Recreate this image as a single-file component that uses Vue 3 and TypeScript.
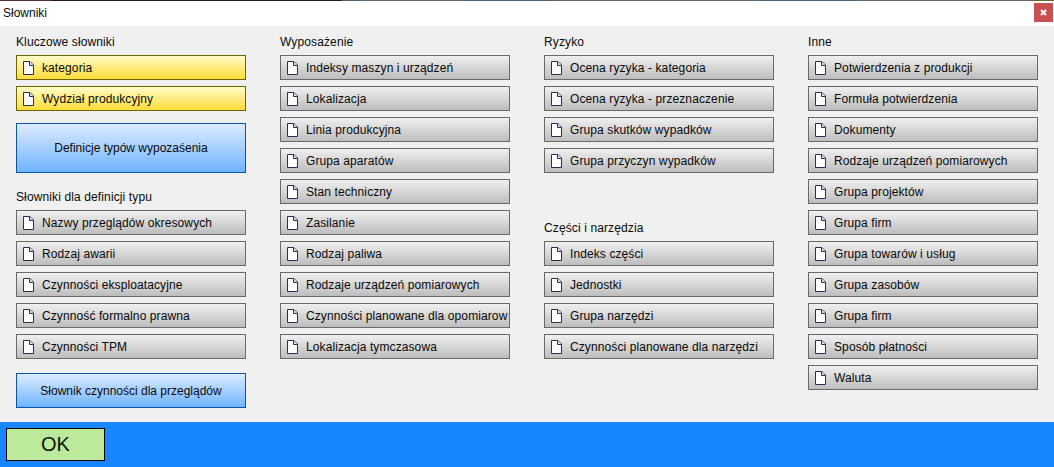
<script setup lang="ts">
type Item = { t: string; y?: boolean }
const col2: string[] = ['Indeksy maszyn i urządzeń','Lokalizacja','Linia produkcyjna','Grupa aparatów','Stan techniczny','Zasilanie','Rodzaj paliwa','Rodzaje urządzeń pomiarowych','Czynności planowane dla opomiarow','Lokalizacja tymczasowa']
const ryzyko: string[] = ['Ocena ryzyka - kategoria','Ocena ryzyka - przeznaczenie','Grupa skutków wypadków','Grupa przyczyn wypadków']
const czesci: string[] = ['Indeks części','Jednostki','Grupa narzędzi','Czynności planowane dla narzędzi']
const inne: string[] = ['Potwierdzenia z produkcji','Formuła potwierdzenia','Dokumenty','Rodzaje urządzeń pomiarowych','Grupa projektów','Grupa firm','Grupa towarów i usług','Grupa zasobów','Grupa firm','Sposób płatności','Waluta']
const key: Item[] = [{ t: 'kategoria', y: true }, { t: 'Wydział produkcyjny', y: true }]
const defs: string[] = ['Nazwy przeglądów okresowych','Rodzaj awarii','Czynności eksploatacyjne','Czynność formalno prawna','Czynności TPM']
const groups: { sections: { label: string; cls: string; items: Item[] }[] }[] = [
  { sections: [{ label: 'Wyposażenie', cls: '', items: col2.map(t => ({ t })) }] },
  { sections: [
    { label: 'Ryzyko', cls: '', items: ryzyko.map(t => ({ t })) },
    { label: 'Części i narzędzia', cls: 'sec-parts', items: czesci.map(t => ({ t })) }
  ] },
  { sections: [{ label: 'Inne', cls: '', items: inne.map(t => ({ t })) }] }
]
</script>

<template>
  <div class="win">
    <header class="title">
      <span>Słowniki</span>
      <button class="close">
        <svg width="7" height="7" viewBox="0 0 7 7"><path d="M1 1l5 5M6 1l-5 5" stroke="#fff" stroke-width="2" fill="none" /></svg>
      </button>
    </header>
    <main class="body">
      <section class="col">
        <div class="label">Kluczowe słowniki</div>
        <div class="list">
          <button v-for="i in key" :key="i.t" class="btn yellow">
            <svg class="ico" width="11" height="14" viewBox="0 0 11 14"><path d="M.5.5h6.500l3.500 3.500v9.500h-10z" fill="#fff" stroke="#2c2c5c" /><path d="M6.500.5v4h4" fill="#dcdce6" stroke="#2c2c5c" /></svg>
            <span>{{ i.t }}</span>
          </button>
        </div>
        <button class="big tall">Definicje typów wypozaśenia</button>
        <div class="label sec-def">Słowniki dla definicji typu</div>
        <div class="list">
          <button v-for="t in defs" :key="t" class="btn">
            <svg class="ico" width="11" height="14" viewBox="0 0 11 14"><path d="M.5.5h6.500l3.500 3.500v9.500h-10z" fill="#fff" stroke="#2c2c5c" /><path d="M6.500.5v4h4" fill="#dcdce6" stroke="#2c2c5c" /></svg>
            <span>{{ t }}</span>
          </button>
        </div>
        <button class="big short">Słownik czynności dla przeglądów</button>
      </section>
      <section v-for="(g, n) in groups" :key="n" class="col">
        <template v-for="s in g.sections" :key="s.label">
          <div class="label" :class="s.cls">{{ s.label }}</div>
          <div class="list">
            <button v-for="(i, k) in s.items" :key="k" class="btn">
              <svg class="ico" width="11" height="14" viewBox="0 0 11 14"><path d="M.5.5h6.500l3.500 3.500v9.500h-10z" fill="#fff" stroke="#2c2c5c" /><path d="M6.500.5v4h4" fill="#dcdce6" stroke="#2c2c5c" /></svg>
              <span>{{ i.t }}</span>
            </button>
          </div>
        </template>
      </section>
    </main>
    <footer class="foot"><button class="ok">OK</button></footer>
  </div>
</template>

<style>
html, body { margin: 0; padding: 0; overflow: hidden; }
</style>
<style scoped>
.win { width: 1054px; height: 467px; display: flex; flex-direction: column; background: #f0f0f0; font-family: "Liberation Sans", Arial, sans-serif; font-size: 12px; color: #0a0a0a; overflow: hidden; }
.title { height: 25px; flex: none; border-top: 1px solid transparent; background: linear-gradient(90deg, #5a2c30 0 52px, #1c1c1c 52px 342px, #4c6478 342px 363px, #666 363px 463px, #4c6478 463px 553px, #666 553px 755px, #4c6478 755px 860px, #666 860px 1030px, #6a6430 1030px) top / 100% 1px no-repeat border-box, linear-gradient(#fff, #fff); display: flex; justify-content: space-between; align-items: center; padding-left: 3px; padding-right: 1px; }
.title span { margin-top: -2px; }
.close { width: 19px; height: 19px; margin-bottom: 2px; background: #c75050; border: 0; padding: 0; display: flex; align-items: center; justify-content: center; }
.body { flex: 1; display: flex; padding: 0 0 0 16px; gap: 34px; }
.col { width: 230px; display: flex; flex-direction: column; }
.label { height: 14px; line-height: 14px; margin-top: 9px; margin-bottom: 6px; white-space: nowrap; letter-spacing: 0.12px; }
.sec-def { margin-top: 17px; }
.sec-parts { margin-top: 48px; }
.list { display: flex; flex-direction: column; gap: 6px; }
.btn { height: 25px; width: 230px; box-sizing: border-box; border: 1px solid #696969; background: linear-gradient(#f0f0f0, #bdbdbd); display: flex; align-items: center; padding: 0 0 0 6px; font: inherit; letter-spacing: 0.1px; color: inherit; text-align: left; overflow: hidden; white-space: nowrap; }
.btn .ico { flex: none; margin-right: 8px; }
.btn.yellow { border-color: #6f6500; background: linear-gradient(#fffcc8, #fddc3a); }
.big { width: 230px; box-sizing: border-box; border: 1px solid #0b55a8; background: linear-gradient(#dcecff, #6fb4ff); font: inherit; color: inherit; padding: 0; }
.tall { height: 50px; margin-top: 12px; }
.short { height: 35px; margin-top: 14px; }
.foot { height: 45px; flex: none; background: #1786ff; display: flex; align-items: center; padding-left: 6px; }
.ok { width: 99px; height: 33px; border: 1px solid #000; background: #bbea9a; font-family: inherit; font-size: 20px; color: #111; padding: 0; }
</style>
